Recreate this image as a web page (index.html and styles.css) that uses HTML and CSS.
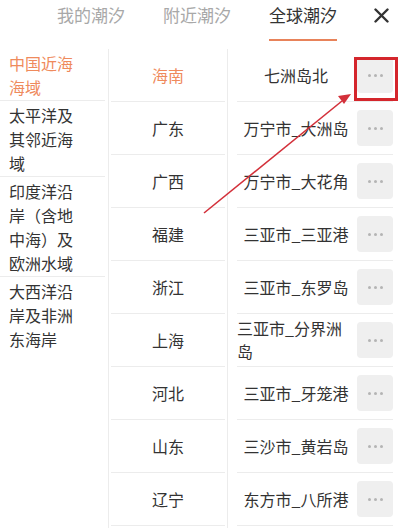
FILE: index.html
```html
<!DOCTYPE html>
<html lang="zh-CN">
  <head>
    <meta charset="UTF-8" />
    <meta name="viewport" content="width=device-width, initial-scale=1.0" />
    <title>全球潮汐</title>
    <link rel="stylesheet" href="styles.css">
  </head>

  <body>
    <!-- 顶部标签 -->
    <div class="header">
      <div class="tabs">
        <span class="tab">我的潮汐</span>
        <span class="tab">附近潮汐</span>
        <span class="tab active">全球潮汐</span>
      </div>
      <svg class="close" width="15" height="15" viewBox="0 0 15 15">
        <path d="M1.5 1.5 L13.5 13.5 M13.5 1.5 L1.5 13.5" stroke="#333" stroke-width="2.4" stroke-linecap="round" />
      </svg>
    </div>

    <!-- 三列选择 -->
    <div class="picker">
      <ul class="sea">
        <li class="active">中国近海海域</li>
        <li>太平洋及其邻近海域</li>
        <li>印度洋沿岸（含地中海）及欧洲水域</li>
        <li>大西洋沿岸及非洲东海岸</li>
      </ul>

      <ul class="province">
        <li class="active">海南</li>
        <li>广东</li>
        <li>广西</li>
        <li>福建</li>
        <li>浙江</li>
        <li>上海</li>
        <li>河北</li>
        <li>山东</li>
        <li>辽宁</li>
      </ul>

      <ul class="station">
        <li><div class="name"><span>七洲岛北</span></div><div class="more"><i></i><i></i><i></i></div></li>
        <li><div class="name"><span>万宁市_大洲岛</span></div><div class="more"><i></i><i></i><i></i></div></li>
        <li><div class="name"><span>万宁市_大花角</span></div><div class="more"><i></i><i></i><i></i></div></li>
        <li><div class="name"><span>三亚市_三亚港</span></div><div class="more"><i></i><i></i><i></i></div></li>
        <li><div class="name"><span>三亚市_东罗岛</span></div><div class="more"><i></i><i></i><i></i></div></li>
        <li><div class="name"><span>三亚市_分界洲岛</span></div><div class="more"><i></i><i></i><i></i></div></li>
        <li><div class="name"><span>三亚市_牙笼港</span></div><div class="more"><i></i><i></i><i></i></div></li>
        <li><div class="name"><span>三沙市_黄岩岛</span></div><div class="more"><i></i><i></i><i></i></div></li>
        <li><div class="name"><span>东方市_八所港</span></div><div class="more"><i></i><i></i><i></i></div></li>
      </ul>
    </div>

    <!-- 标注 -->
    <div class="mark"></div>
    <svg class="arrow" width="400" height="528" viewBox="0 0 400 528">
      <line x1="204" y1="213" x2="342" y2="101" stroke="#d3303a" stroke-width="1.6" />
      <polygon points="351,94 338,96 344,104" fill="#d3303a" />
    </svg>
  </body>
</html>
```

FILE: styles.css
```css
body {
  margin: 0;
  background-color: #fff;
  font-family: "Noto Sans CJK SC", "Noto Sans", sans-serif;
  color: #333;
  width: 400px;
  height: 528px;
  overflow: hidden;
  position: relative;
}

ul {
  list-style: none;
  margin: 0;
  padding: 0;
}

.header {
  display: flex;
  align-items: flex-start;
  height: 49px;
}

.tabs {
  display: flex;
  gap: 38px;
  padding-left: 57px;
}

.tab {
  font-size: 17px;
  line-height: 22px;
  padding: 4px 0 13px;
  color: #a8a8a8;
  border-bottom: 2px solid transparent;
}

.tab.active {
  color: #333;
  border-bottom-color: #e8835a;
}

.close {
  margin: 8px 0 0 37px;
}

.picker {
  display: flex;
  height: 479px;
  overflow: hidden;
}

.sea {
  width: 108px;
  flex-shrink: 0;
}

.sea li {
  font-size: 16px;
  line-height: 24px;
  padding: 2px 30px 1px 9px;
  margin-right: 3px;
  border-bottom: 1px solid #ececec;
}

.sea li:last-child {
  border-bottom: none;
}

.sea li.active,
.province li.active {
  color: #ef8a5c;
}

.province {
  width: 118px;
  flex-shrink: 0;
  border-left: 1px solid #ececec;
  border-right: 1px solid #ececec;
}

.province li {
  height: 52px;
  margin: 0 2px;
  display: flex;
  align-items: center;
  justify-content: center;
  font-size: 16px;
  border-bottom: 1px solid #ececec;
}

.station {
  flex: 1;
}

.station li {
  height: 52px;
  display: flex;
  align-items: center;
  gap: 2px;
  margin: 0 7px 0 9px;
  border-bottom: 1px solid #ececec;
}

.name {
  flex: 1;
  display: flex;
  justify-content: center;
  font-size: 16px;
  line-height: 23px;
}

.more {
  width: 36px;
  height: 36px;
  flex-shrink: 0;
  background-color: #efefef;
  border-radius: 4px;
  display: flex;
  align-items: center;
  justify-content: center;
  gap: 3px;
}

.more i {
  width: 3px;
  height: 3px;
  border-radius: 50%;
  background-color: #b4b4b4;
}

.mark {
  position: absolute;
  left: 354px;
  top: 57px;
  width: 44px;
  height: 44px;
  box-sizing: border-box;
  border: 3px solid #d4262c;
}

.arrow {
  position: absolute;
  left: 0;
  top: 0;
  pointer-events: none;
}
```
